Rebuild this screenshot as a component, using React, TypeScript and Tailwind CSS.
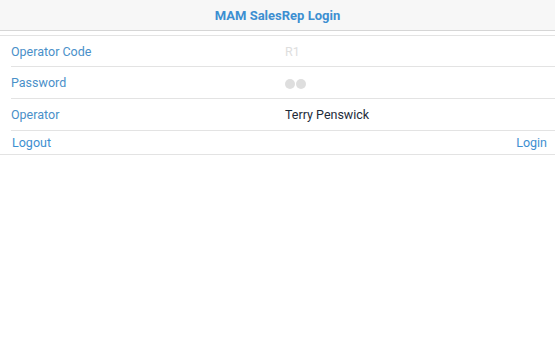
export default function App() {
  const font = { fontFamily: "Roboto, 'Noto Sans', sans-serif" };
  return (
    <div className="w-[555px] h-[350px] bg-white" style={font}>
      <div className="h-[31px] bg-[#f7f7f7] border-b border-[#d6d6d6] flex items-center justify-center pt-[1px]">
        <span className="text-[13px] font-bold text-[#3d8fd1]">MAM SalesRep Login</span>
      </div>
      <div className="h-[4px]" />
      <div className="border-t border-[#e3e3e3]">
        <div className="pl-[11px]">
          <div className="h-[31px] flex items-center border-b border-[#e3e3e3] text-[12.5px] pt-[3px]">
            <span className="w-[274px] text-[#4a90c9]">Operator Code</span>
            <span className="text-[#dedede]">R1</span>
          </div>
          <div className="h-[32px] flex items-center border-b border-[#e3e3e3] text-[12.5px] pt-[2px]">
            <span className="w-[274px] text-[#4a90c9]">Password</span>
            <span className="flex gap-[1px]">
              <span className="w-[10px] h-[10px] rounded-full bg-[#dedede]" />
              <span className="w-[10px] h-[10px] rounded-full bg-[#dedede]" />
            </span>
          </div>
          <div className="h-[32px] flex items-center border-b border-[#e3e3e3] text-[12.5px] pt-[2px]">
            <span className="w-[274px] text-[#4a90c9]">Operator</span>
            <span className="text-[#1e2b3a]">Terry Penswick</span>
          </div>
        </div>
        <div className="h-[24px] flex items-center justify-between pl-[12px] pr-[8px] border-b border-[#e3e3e3] text-[12.5px] text-[#3d8fd1] pt-[1px]">
          <span>Logout</span>
          <span>Login</span>
        </div>
      </div>
    </div>
  );
}
